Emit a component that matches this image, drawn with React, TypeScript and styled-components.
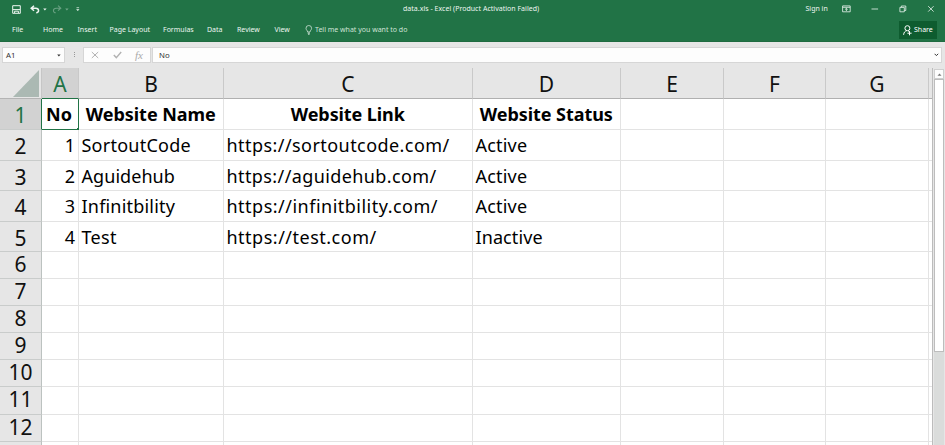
import React from 'react';
import styled, { createGlobalStyle, css } from 'styled-components';

const GREEN = '#217346';
const COLUMN_TRACKS = '37px 145px 249px 148px 103px 102px 103px minmax(0, 1fr)';

const GlobalStyle = createGlobalStyle`
  *, *::before, *::after { box-sizing: border-box; }
  body { margin: 0; overflow: hidden; background: #e6e6e6; font-family: "Noto Sans", "Open Sans", sans-serif; }
`;

const Window = styled.div`
  display: flex;
  flex-direction: column;
  width: 945px;
  height: 445px;
  overflow: hidden;
  background: #e6e6e6;
`;

const Ribbon = styled.header`
  display: flex;
  flex-direction: column;
  height: 42px;
  flex: none;
  background: ${GREEN};
  border-bottom: 1px solid #1f6b41;
  color: #eef6f1;
  font-size: 7px;
  line-height: 10px;
  white-space: nowrap;
`;

const TitleBar = styled.div`
  display: grid;
  grid-template-columns: 403px 1fr auto;
  height: 18px;
  align-items: center;
`;

const QuickAccess = styled.div`
  display: flex;
  align-items: center;
  padding-left: 12px;
`;

const Title = styled.span`
  letter-spacing: 0.02px;
`;

const WindowControls = styled.div`
  display: flex;
  align-items: center;
  padding-right: 10px;
`;

const SignIn = styled.span`
  width: 36.5px;
`;

const TabRow = styled.nav`
  display: flex;
  align-items: center;
  height: 23px;
  padding-right: 8px;
`;

const Tab = styled.span<{ $width: number }>`
  width: ${p => p.$width}px;
  flex: none;
`;

const FileTab = styled(Tab)`
  padding-left: 12px;
`;

const TellMe = styled.span`
  display: flex;
  align-items: center;
  gap: 2px;
  flex: 1;
  color: #cfe3d7;
`;

const ShareButton = styled.button`
  display: flex;
  align-items: center;
  gap: 2px;
  width: 38px;
  height: 18px;
  margin-top: 1px;
  padding: 0 0 0 4px;
  border: 0;
  background: #0e5c2f;
  color: #fff;
  font: 7px/10px "Noto Sans", sans-serif;
`;

const FormulaBar = styled.div`
  display: flex;
  flex: none;
  height: 26px;
  padding: 5px 3px 6px 2px;
  font-size: 7.8px;
  color: #333;
`;

const fieldBox = css`
  display: flex;
  align-items: center;
  height: 16px;
  background: #fdfdfd;
  border: 1px solid #d6d6d6;
`;

const NameBox = styled.div`
  ${fieldBox}
  justify-content: space-between;
  width: 63px;
  padding: 0 3px;
`;

const Grip = styled.div`
  display: flex;
  flex-direction: column;
  align-items: center;
  justify-content: center;
  gap: 1px;
  width: 18px;
`;

const GripDot = styled.i`
  width: 1px;
  height: 1px;
  background: #999;
`;

const EntryButtons = styled.div`
  ${fieldBox}
  width: 68px;
  padding-left: 7px;
`;

const FormulaField = styled.div`
  ${fieldBox}
  justify-content: space-between;
  flex: 1;
  margin-left: 1px;
  padding: 0 2px 0 6px;
`;

const Workspace = styled.main`
  display: flex;
  flex: 1;
  min-height: 0;
`;

const Sheet = styled.div`
  display: grid;
  grid-template-columns: minmax(0, 1fr);
  grid-template-rows: 31px repeat(12, auto) 1fr;
  flex: none;
  width: 933px;
  height: 377px;
  border-right: 1px solid #bcbcbc;
`;

const SheetRow = styled.div<{ $height: number }>`
  display: grid;
  grid-template-columns: 42px minmax(0, 1fr);
  height: ${p => p.$height}px;
`;

const Cells = styled.div`
  display: grid;
  grid-template-columns: ${COLUMN_TRACKS};
  min-width: 0;
`;

const Corner = styled.div`
  display: flex;
  align-items: flex-end;
  justify-content: flex-end;
  padding: 0 2px 1px 0;
  border-right: 1px solid #c6c6c6;
  border-bottom: 1px solid #b4b4b4;
`;

const headingText = css<{ $selected?: boolean }>`
  display: flex;
  justify-content: center;
  font-size: 21px;
  line-height: 24px;
  color: ${p => (p.$selected ? GREEN : '#111')};
  background: ${p => (p.$selected ? '#d2d2d2' : '#e6e6e6')};
`;

const ColumnHeading = styled.div<{ $selected?: boolean }>`
  ${headingText}
  padding-top: 4px;
  border-right: 1px solid #c9c9c9;
  border-bottom: 1px solid ${p => (p.$selected ? GREEN : '#b0b0b0')};

  &:last-child { border-right: 0; }
`;

const RowHeading = styled.div<{ $selected?: boolean; $tall: boolean }>`
  ${headingText}
  padding-top: ${p => (p.$tall ? 4 : 0)}px;
  border-right: 1px solid ${p => (p.$selected ? GREEN : '#bcc2c0')};
  border-bottom: 1px solid #c9cccb;
`;

const Cell = styled.div<{ $align?: string; $bold?: boolean; $track?: number; $active?: boolean }>`
  position: relative;
  min-width: 0;
  padding: 3px 3px 0 2.5px;
  border-right: 1px solid #e3e3e3;
  border-bottom: 1px solid #e3e3e3;
  background: #fff;
  color: #000;
  font-size: 18px;
  line-height: 24px;
  white-space: nowrap;
  text-align: ${p => p.$align ?? 'left'};
  font-weight: ${p => (p.$bold ? 700 : 400)};
  letter-spacing: ${p => p.$track ?? 0}px;

  &:last-child {
    padding: 0;
    border-right: 0;
  }

  ${p => p.$active && css`
    padding-left: 1px;
    border-color: ${GREEN};

    &::after {
      content: '';
      position: absolute;
      right: -2px;
      bottom: -2px;
      width: 3px;
      height: 3px;
      background: ${GREEN};
    }
  `}
`;

const ScrollBar = styled.div`
  display: flex;
  flex-direction: column;
  width: 12px;
  padding: 0 1px 0 1px;
`;

const ScrollUp = styled.div`
  display: flex;
  align-items: center;
  justify-content: center;
  height: 10px;
  margin-top: 1px;
  background: #fdfdfd;
  border: 1px solid #cfcfcf;
`;

const ScrollThumb = styled.div`
  height: 273px;
  background: #fff;
  border: 1px solid #bdbdbd;
`;

const ScrollTrack = styled.div`
  flex: 1;
  background: #dadcdb;
`;

const Icon = styled.svg<{ $ml?: number }>`
  display: block;
  flex: none;
  margin-left: ${p => p.$ml ?? 0}px;
  fill: none;
  stroke: currentColor;
`;

const FxLabel = styled.span`
  margin-left: 13px;
  color: #aaa;
  font: italic 11px/12px "Liberation Serif", serif;
`;

const TABS: [string, number][] = [
  ['Home', 34.5], ['Insert', 32], ['Page Layout', 53.5], ['Formulas', 44],
  ['Data', 30], ['Review', 37.5], ['View', 30.5],
];

const LETTERS = ['A', 'B', 'C', 'D', 'E', 'F', 'G', ''];

type CellData = { text: string; align?: string; bold?: boolean; track?: number };

const DATA: CellData[][] = [
  [
    { text: 'No', align: 'center', bold: true },
    { text: 'Website Name', align: 'center', bold: true, track: -0.04 },
    { text: 'Website Link', align: 'center', bold: true, track: -0.1 },
    { text: 'Website Status', align: 'center', bold: true, track: -0.06 },
  ],
  [{ text: '1', align: 'right' }, { text: 'SortoutCode', track: 0.24 }, { text: 'https://sortoutcode.com/', track: 0.44 }, { text: 'Active', track: 0.2 }],
  [{ text: '2', align: 'right' }, { text: 'Aguidehub', track: 0.06 }, { text: 'https://aguidehub.com/', track: 0.4 }, { text: 'Active', track: 0.2 }],
  [{ text: '3', align: 'right' }, { text: 'Infinitbility', track: 0.2 }, { text: 'https://infinitbility.com/', track: 0.49 }, { text: 'Active', track: 0.2 }],
  [{ text: '4', align: 'right' }, { text: 'Test', track: 0.3 }, { text: 'https://test.com/', track: 0.5 }, { text: 'Inactive', track: 0.1 }],
];

const ROW_HEIGHTS = [31, 31, 30, 31, 30, 27, 27, 27, 27, 27, 28, 27];

function Caret({ ml = 0, dim = false }: { ml?: number; dim?: boolean }) {
  return (
    <Icon $ml={ml} width="4" height="3" viewBox="0 0 4 3" opacity={dim ? 0.4 : 1}>
      <path d="M0.2 0.5h3.4L1.9 2.4z" fill="currentColor" stroke="none" />
    </Icon>
  );
}

function QuickAccessIcons() {
  return (
    <QuickAccess>
      <Icon width="9" height="9" viewBox="0 0 9 9" strokeWidth="1">
        <path d="M0.7 0.7h7.6v7.6H0.7z" />
        <path d="M1 4.6h7M2.6 8V6.2h3.8V8" />
      </Icon>
      <Icon $ml={9} width="10" height="9" viewBox="0 0 10 9" strokeWidth="1.5">
        <path d="M4 0.7L1.2 3.2L4 5.7M1.4 3.2h4.4c3.6 0 3.6 4.5 0.4 4.6" />
      </Icon>
      <Caret ml={3} />
      <Icon $ml={5} width="10" height="9" viewBox="0 0 10 9" strokeWidth="1.1" opacity="0.35">
        <path d="M6 0.7L8.8 3.2L6 5.7M8.6 3.2H4.2c-3.6 0-3.6 4.5-0.4 4.6" />
      </Icon>
      <Caret ml={3} dim />
      <Icon $ml={7} width="4" height="5" viewBox="0 0 4 5">
        <path d="M0.5 0.7h2.6" strokeWidth="0.7" />
        <path d="M0.1 2.2h3.4L1.8 4z" fill="currentColor" stroke="none" />
      </Icon>
    </QuickAccess>
  );
}

function ControlIcons() {
  return (
    <>
      <Icon width="9" height="8" viewBox="0 0 9 8" strokeWidth="0.8">
        <path d="M0.6 0.9h7.6v5.9H0.6zM0.6 2.3h7.6M4.4 6V3.4M3.1 4.5l1.3-1.2l1.3 1.2" />
      </Icon>
      <Icon $ml={20} width="8" height="8" viewBox="0 0 8 8" strokeWidth="0.8">
        <path d="M0.5 4h6.6" />
      </Icon>
      <Icon $ml={20} width="8" height="8" viewBox="0 0 8 8" strokeWidth="0.8">
        <path d="M0.9 2.4h4.4v4.4H0.9zM2.3 2.3V1h4.5v4.5H5.4" />
      </Icon>
      <Icon $ml={20} width="8" height="8" viewBox="0 0 8 8" strokeWidth="0.8">
        <path d="M1.2 1.2l5.4 5.4M6.6 1.2L1.2 6.6" />
      </Icon>
    </>
  );
}

export default function App() {
  return (
    <Window>
      <GlobalStyle />
      <Ribbon>
        <TitleBar>
          <QuickAccessIcons />
          <Title>data.xls - Excel (Product Activation Failed)</Title>
          <WindowControls>
            <SignIn>Sign in</SignIn>
            <ControlIcons />
          </WindowControls>
        </TitleBar>
        <TabRow>
          <FileTab $width={43}>File</FileTab>
          {TABS.map(([label, width]) => (
            <Tab key={label} $width={width}>{label}</Tab>
          ))}
          <TellMe>
            <Icon width="8" height="10" viewBox="0 0 8 10" strokeWidth="0.8">
              <path d="M2.6 7C2.6 5.4 1 5 1 3.3a2.8 2.8 0 0 1 5.6 0C6.6 5 5 5.4 5 7z" />
              <path d="M2.7 8.1h2.2M3 9.2h1.6" strokeWidth="1" />
            </Icon>
            Tell me what you want to do
          </TellMe>
          <ShareButton>
            <Icon width="9" height="11" viewBox="0 0 9 11" strokeWidth="1">
              <circle cx="4.4" cy="3.2" r="2.5" />
              <path d="M0.6 9.8C0.8 7.4 2 6 3.8 5.7M5 5.7l1.2 0.9M4.4 8.2h4.2M6.5 6.1v4.2" />
            </Icon>
            Share
          </ShareButton>
        </TabRow>
      </Ribbon>

      <FormulaBar>
        <NameBox>A1<Caret /></NameBox>
        <Grip><GripDot /><GripDot /><GripDot /></Grip>
        <EntryButtons>
          <Icon width="8" height="8" viewBox="0 0 8 8" strokeWidth="1" color="#b2b2b2">
            <path d="M0.8 1l6.4 6M7.2 1L0.8 7" />
          </Icon>
          <Icon $ml={14} width="9" height="8" viewBox="0 0 9 8" strokeWidth="1.4" color="#b2b2b2">
            <path d="M0.8 4l2.5 2.6L8.2 1" />
          </Icon>
          <FxLabel>fx</FxLabel>
        </EntryButtons>
        <FormulaField>
          No
          <Icon width="5" height="4" viewBox="0 0 5 4" strokeWidth="1">
            <path d="M0.6 0.8l1.8 1.8l1.8-1.8" />
          </Icon>
        </FormulaField>
      </FormulaBar>

      <Workspace>
        <Sheet>
          <SheetRow $height={31}>
            <Corner>
              <Icon width="26" height="27" viewBox="0 0 26 27">
                <path d="M26 0v27H0z" fill="#abb9b3" stroke="none" />
              </Icon>
            </Corner>
            <Cells>
              {LETTERS.map((letter, i) => (
                <ColumnHeading key={i} $selected={i === 0}>{letter}</ColumnHeading>
              ))}
            </Cells>
          </SheetRow>
          {ROW_HEIGHTS.map((height, r) => (
            <SheetRow key={r} $height={height}>
              <RowHeading $selected={r === 0} $tall={r < 5}>{r + 1}</RowHeading>
              <Cells>
                {LETTERS.map((_, c) => {
                  const cell = DATA[r]?.[c];
                  return (
                    <Cell
                      key={c}
                      $align={cell?.align}
                      $bold={cell?.bold}
                      $track={cell?.track}
                      $active={r === 0 && c === 0}
                    >
                      {cell?.text}
                    </Cell>
                  );
                })}
              </Cells>
            </SheetRow>
          ))}
          <SheetRow $height={4}>
            <RowHeading $tall={false} />
            <Cells>{LETTERS.map((_, c) => <Cell key={c} />)}</Cells>
          </SheetRow>
        </Sheet>
        <ScrollBar>
          <ScrollUp>
            <Icon width="5" height="3" viewBox="0 0 5 3" color="#777">
              <path d="M0.5 2.8h4L2.5 0.4z" fill="currentColor" stroke="none" />
            </Icon>
          </ScrollUp>
          <ScrollThumb />
          <ScrollTrack />
        </ScrollBar>
      </Workspace>
    </Window>
  );
}
